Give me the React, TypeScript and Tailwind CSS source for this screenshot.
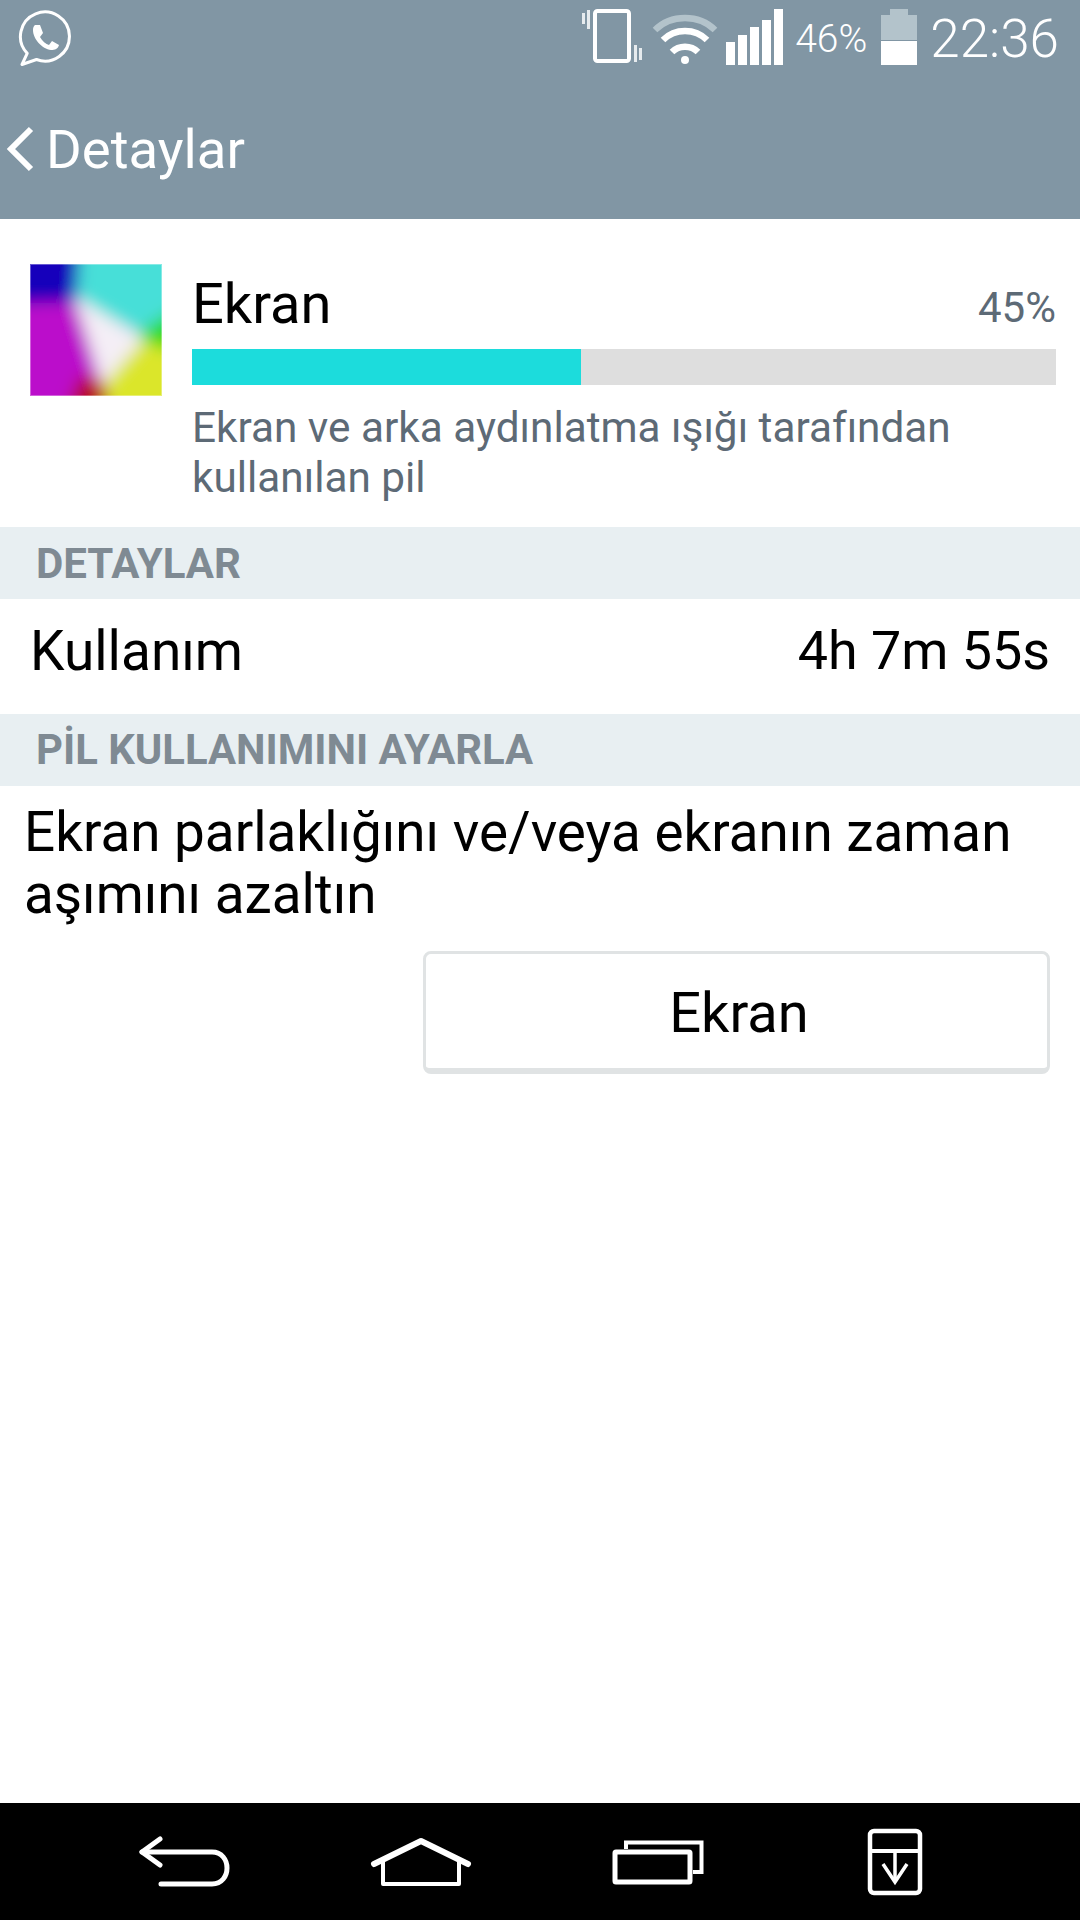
import React from 'react'

function WhatsApp() {
  return (
    <svg width="56" height="58" viewBox="18 10 56 58" fill="none" stroke="#fff">
      <path d="M22 64.5 L27.2 53.4 A24.5 24.5 0 1 1 36.5 59.5 Z" strokeWidth="3" strokeLinejoin="round" />
      <path d="M35 25 L40 25 L43 33 L40 37 C42 41 46 44 49 45 L52 41 L59 45 C58 49 55 50 51 50 C42 49 33 39 33 30 C33 28 33.5 26 35 25 Z" fill="#fff" stroke="none" />
    </svg>
  )
}

// viewBox uses screen coordinates so the shapes line up with the reference
function StatusIcons() {
  return (
    <svg width="204" height="60" viewBox="580 8 204 60">
      {/* vibrate */}
      <rect x="581" y="13" width="3" height="11" fill="#e6ebee" />
      <rect x="586" y="10" width="3" height="19" fill="#e6ebee" />
      <rect x="594" y="11" width="34" height="50" rx="2.5" fill="none" stroke="#fff" strokeWidth="4" />
      <rect x="633" y="45" width="3" height="17" fill="#e6ebee" />
      <rect x="638" y="48" width="3" height="12" fill="#e6ebee" />
      {/* wifi */}
      <path d="M654 30 C670 14 698 14 714 30" fill="none" stroke="#b3c3cb" strokeWidth="6.5" />
      <path d="M662 40 C674 28 694 28 706 40" fill="none" stroke="#fff" strokeWidth="6.5" />
      <path d="M671 52 C678 45 690 45 697 52" fill="none" stroke="#fff" strokeWidth="6.5" />
      <circle cx="684" cy="60" r="4" fill="#fff" />
      {/* signal */}
      <rect x="725" y="42" width="9" height="23" fill="#fff" />
      <rect x="737" y="35" width="9" height="30" fill="#fff" />
      <rect x="749" y="27" width="9" height="38" fill="#fff" />
      <rect x="761" y="20" width="9" height="45" fill="#fff" />
      <rect x="773" y="9" width="9" height="56" fill="#fff" />
    </svg>
  )
}

function Battery() {
  return (
    <svg width="36" height="58" viewBox="880 8 36 58">
      <rect x="889" y="9" width="18" height="6" fill="#b3c3cb" />
      <rect x="880" y="15" width="36" height="25" fill="#b3c3cb" />
      <rect x="880" y="41" width="36" height="24" fill="#fff" />
    </svg>
  )
}

function ScreenArt() {
  return (
    <svg width="132" height="132" viewBox="0 0 132 132" className="shrink-0">
      <defs>
        <filter id="soft" x="-20%" y="-20%" width="140%" height="140%">
          <feGaussianBlur stdDeviation="8" />
        </filter>
        <clipPath id="box">
          <rect width="132" height="132" />
        </clipPath>
      </defs>
      <g clipPath="url(#box)">
        <g filter="url(#soft)">
          <rect x="-20" y="-20" width="172" height="172" fill="#bb0ccb" />
          <polygon points="-20,-20 50,-20 46,38 -20,40" fill="#1204bb" />
          <polygon points="50,-20 152,-20 152,54 112,72 46,36" fill="#46dfd8" />
          <polygon points="152,40 152,96 116,86 108,70" fill="#2fdc1c" />
          <polygon points="108,76 152,90 152,152 74,152 72,116" fill="#dbe62c" />
          <polygon points="34,152 80,152 74,116 50,112" fill="#b80a1e" />
          <polygon points="44,32 114,74 72,122" fill="#f4eef6" />
        </g>
      </g>
      <rect x="0.5" y="0.5" width="131" height="131" fill="none" stroke="#fff" strokeOpacity="0.35" />
    </svg>
  )
}

function NavBar() {
  return (
    <div className="flex h-[117px] items-center bg-black pl-[136px]">
      <svg width="96" height="54" viewBox="136 1834 96 54" fill="none" stroke="#fff" strokeWidth="5" strokeLinecap="round" strokeLinejoin="round">
        <path d="M160 1838 L142 1851 L160 1864" />
        <path d="M142 1851 H212 C232 1851 232 1883 212 1883 H161" />
      </svg>
      <svg width="104" height="50" viewBox="369 1836 104 50" fill="none" stroke="#fff" strokeLinejoin="round" className="ml-[137px]">
        <path d="M374 1863 L421 1840 L468 1863" strokeWidth="6" strokeLinecap="round" />
        <path d="M383 1858 V1883 H459 V1858" strokeWidth="4" />
      </svg>
      <svg width="94" height="46" viewBox="611 1839 94 46" fill="none" stroke="#fff" strokeWidth="4" className="ml-[138px]">
        <rect x="615" y="1852" width="75" height="30" rx="1" strokeWidth="5" />
        <path d="M626 1849 V1842.5 H701.5 V1872 H693" />
      </svg>
      <svg width="58" height="70" viewBox="866 1827 58 70" fill="none" stroke="#fff" className="ml-[161px]">
        <rect x="870" y="1831" width="50" height="62" rx="4" strokeWidth="4.5" />
        <path d="M870 1851 H920" strokeWidth="4" />
        <path d="M895 1853 V1880" strokeWidth="3.5" />
        <path d="M883 1864 L895 1882 L907 1864" strokeWidth="3.5" />
      </svg>
    </div>
  )
}

export default function App() {
  return (
    <div className="flex h-[1920px] w-[1080px] flex-col overflow-hidden bg-white font-['Roboto',sans-serif] text-black">
      {/* Header */}
      <div className="h-[219px] bg-[#8196a4] text-white">
        <div className="flex h-[75px] items-start justify-between pl-[18px] pr-[21px] pt-[8px]">
          <div className="mt-[2px]"><WhatsApp /></div>
          <div className="flex items-start">
            <StatusIcons />
            <span className="ml-[10px] mt-[11px] text-[39px] font-light leading-[40px]">46%</span>
            <span className="ml-[14px]"><Battery /></span>
            <span className="ml-[13px] mt-[6px] text-[53px] font-light leading-[50px]">22:36</span>
          </div>
        </div>
        <div className="flex h-[144px] items-center pl-[6px] pt-[3px]">
          <svg width="28" height="46" viewBox="0 0 28 46" fill="none" stroke="#fff" strokeWidth="6">
            <path d="M25 3 L5 23 L25 43" />
          </svg>
          <span className="ml-[12px] text-[54.5px] leading-[60px]">Detaylar</span>
        </div>
      </div>

      {/* Usage summary */}
      <div className="flex h-[308px] pl-[30px] pr-[24px] pt-[45px]">
        <ScreenArt />
        <div className="ml-[30px] flex-1">
          <div className="flex h-[85px] items-start justify-between pt-[10px]">
            <span className="text-[56px] leading-[60px]">Ekran</span>
            <span className="mt-[12px] text-[42px] leading-[44px] text-[#5d6a76]">45%</span>
          </div>
          <div className="h-[36px] w-full bg-[#dedede]">
            <div className="h-full bg-[#1cdcdc]" style={{ width: '45%' }} />
          </div>
          <p className="mt-[18px] text-[42.3px] leading-[50px] text-[#5d6a76]">
            Ekran ve arka aydınlatma ışığı tarafından kullanılan pil
          </p>
        </div>
      </div>

      <div className="flex h-[72px] items-center bg-[#e8eff2] pl-[36px] text-[42px] font-bold text-[#7f8a93]">DETAYLAR</div>
      <div className="flex h-[115px] items-center justify-between px-[30px] pb-[10px] text-[55px]">
        <span>Kullanım</span>
        <span className="text-[53.8px]">4h 7m 55s</span>
      </div>
      <div className="flex h-[72px] items-center bg-[#e8eff2] pl-[36px] text-[41.8px] font-bold text-[#7f8a93]">PİL KULLANIMINI AYARLA</div>

      <p className="px-[24px] pt-[15px] text-[54.8px] leading-[62px]">
        Ekran parlaklığını ve/veya ekranın zaman aşımını azaltın
      </p>
      <div className="flex justify-end pr-[30px] pt-[26px]">
        <div className="flex h-[123px] w-[627px] items-center justify-center rounded-[8px] border-[3px] border-b-[6px] border-[#e0e3e4] pl-[5px] pt-[4px] text-[56px]">
          Ekran
        </div>
      </div>

      <div className="flex-1" />
      <NavBar />
    </div>
  )
}
